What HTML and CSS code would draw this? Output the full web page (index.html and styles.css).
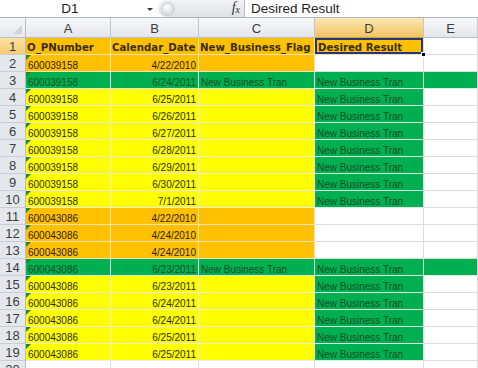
FILE: index.html
```html
<!DOCTYPE html>
<html>
<head>
<meta charset="utf-8">
<link rel="stylesheet" href="styles.css">
</head>
<body>
<div class="app">
  <div class="fbar">
    <div class="namebox"><span class="nb-text">D1</span><span class="nb-arrow"></span></div>
    <div class="splitter"><span class="knob"></span><span class="fx">f<sub>x</sub></span></div>
    <div class="formula">Desired Result</div>
  </div>
  <div class="sheet">
    <div class="corner"></div>
    <div class="ch">A</div><div class="ch">B</div><div class="ch">C</div><div class="ch sel">D</div><div class="ch">E</div>

    <div class="rh sel">1</div>
    <div class="c o hd">O_PNumber</div><div class="c o hd">Calendar_Date</div><div class="c o hd">New_Business_Flag</div><div class="c o hd active">Desired Result</div><div class="c"></div>

    <div class="rh">2</div>
    <div class="c o t">600039158</div><div class="c o r">4/22/2010</div><div class="c o"></div><div class="c"></div><div class="c"></div>

    <div class="rh">3</div>
    <div class="c g t">600039158</div><div class="c g r">6/24/2011</div><div class="c g">New Business Tran</div><div class="c g">New Business Tran</div><div class="c g"></div>

    <div class="rh">4</div>
    <div class="c y t">600039158</div><div class="c y r">6/25/2011</div><div class="c y"></div><div class="c g">New Business Tran</div><div class="c"></div>

    <div class="rh">5</div>
    <div class="c y t">600039158</div><div class="c y r">6/26/2011</div><div class="c y"></div><div class="c g">New Business Tran</div><div class="c"></div>

    <div class="rh">6</div>
    <div class="c y t">600039158</div><div class="c y r">6/27/2011</div><div class="c y"></div><div class="c g">New Business Tran</div><div class="c"></div>

    <div class="rh">7</div>
    <div class="c y t">600039158</div><div class="c y r">6/28/2011</div><div class="c y"></div><div class="c g">New Business Tran</div><div class="c"></div>

    <div class="rh">8</div>
    <div class="c y t">600039158</div><div class="c y r">6/29/2011</div><div class="c y"></div><div class="c g">New Business Tran</div><div class="c"></div>

    <div class="rh">9</div>
    <div class="c y t">600039158</div><div class="c y r">6/30/2011</div><div class="c y"></div><div class="c g">New Business Tran</div><div class="c"></div>

    <div class="rh">10</div>
    <div class="c y t">600039158</div><div class="c y r">7/1/2011</div><div class="c y"></div><div class="c g">New Business Tran</div><div class="c"></div>

    <div class="rh">11</div>
    <div class="c o t">600043086</div><div class="c o r">4/22/2010</div><div class="c o"></div><div class="c"></div><div class="c"></div>

    <div class="rh">12</div>
    <div class="c o t">600043086</div><div class="c o r">4/24/2010</div><div class="c o"></div><div class="c"></div><div class="c"></div>

    <div class="rh">13</div>
    <div class="c o t">600043086</div><div class="c o r">4/24/2010</div><div class="c o"></div><div class="c"></div><div class="c"></div>

    <div class="rh">14</div>
    <div class="c g t">600043086</div><div class="c g r">6/23/2011</div><div class="c g">New Business Tran</div><div class="c g">New Business Tran</div><div class="c g"></div>

    <div class="rh">15</div>
    <div class="c y t">600043086</div><div class="c y r">6/23/2011</div><div class="c y"></div><div class="c g">New Business Tran</div><div class="c"></div>

    <div class="rh">16</div>
    <div class="c y t">600043086</div><div class="c y r">6/24/2011</div><div class="c y"></div><div class="c g">New Business Tran</div><div class="c"></div>

    <div class="rh">17</div>
    <div class="c y t">600043086</div><div class="c y r">6/24/2011</div><div class="c y"></div><div class="c g">New Business Tran</div><div class="c"></div>

    <div class="rh">18</div>
    <div class="c y t">600043086</div><div class="c y r">6/25/2011</div><div class="c y"></div><div class="c g">New Business Tran</div><div class="c"></div>

    <div class="rh">19</div>
    <div class="c y t">600043086</div><div class="c y r">6/25/2011</div><div class="c y"></div><div class="c g">New Business Tran</div><div class="c"></div>

    <div class="rh">20</div>
    <div class="c"></div><div class="c"></div><div class="c"></div><div class="c"></div><div class="c"></div>
  </div>
</div>
</body>
</html>
```
FILE: styles.css
```css
html, body {
  margin: 0;
  padding: 0;
  background: #ffffff;
  overflow: hidden;
}

.app {
  width: 478px;
  height: 368px;
  overflow: hidden;
  font-family: "Liberation Sans", Arial, sans-serif;
}

/* formula bar */
.fbar {
  display: flex;
  height: 18px;
  box-sizing: border-box;
  border-bottom: 1px solid #aeb4bc;
  background: #ffffff;
}

.namebox {
  width: 158px;
  display: flex;
  align-items: center;
  position: relative;
  background: #ffffff;
}

.nb-text {
  width: 140px;
  text-align: center;
  font-size: 13.5px;
  line-height: 17px;
  color: #1e1e1e;
}

.nb-arrow {
  width: 0;
  height: 0;
  margin-left: 7px;
  margin-top: 1px;
  border-left: 3px solid transparent;
  border-right: 3px solid transparent;
  border-top: 3px solid #3a3a3a;
}

.splitter {
  width: 87px;
  display: flex;
  align-items: center;
  justify-content: space-between;
  background: linear-gradient(#f1f2f4, #dfe2e6);
  border-radius: 9px 0 0 9px;
  border-right: 1px solid #b8bdc4;
  padding-left: 3px;
  padding-right: 4px;
  box-sizing: border-box;
}

.knob {
  width: 14px;
  height: 14px;
  border-radius: 50%;
  background: radial-gradient(circle at 40% 35%, #ffffff, #d6d9de 70%);
  border: 1px solid #c9cdd3;
  box-sizing: border-box;
}

.fx {
  font-family: "Liberation Serif", "Times New Roman", serif;
  font-style: italic;
  font-size: 14px;
  line-height: 16px;
  color: #333333;
}

.fx sub {
  font-size: 10px;
  vertical-align: -1px;
}

.formula {
  flex: 1;
  padding-left: 6px;
  font-size: 13.5px;
  line-height: 17px;
  color: #1e1e1e;
}

/* sheet */
.sheet {
  display: grid;
  grid-template-columns: 26px 85px 88px 116px 109px 54px;
  grid-template-rows: 20px repeat(20, 17px);
}

.corner {
  position: relative;
  background: linear-gradient(#f6f7f9, #e4e7eb);
  border-right: 1px solid #b8bec6;
  border-bottom: 1px solid #b8bec6;
  box-sizing: border-box;
}

.corner::after {
  content: "";
  position: absolute;
  right: 3px;
  bottom: 3px;
  width: 0;
  height: 0;
  border-left: 9px solid transparent;
  border-bottom: 9px solid #cfd4da;
}

.ch {
  box-sizing: border-box;
  height: 20px;
  padding-top: 2px;
  line-height: 17px;
  text-align: center;
  font-size: 13px;
  color: #3c3c3c;
  background: linear-gradient(#f7f8fa, #e3e6ea);
  border-right: 1px solid #c3c8cf;
  border-bottom: 1px solid #b8bec6;
  overflow: hidden;
}

.ch.sel {
  background: linear-gradient(#fbe6b3, #f2c461);
  border-bottom-color: #c9a24a;
}

.rh {
  box-sizing: border-box;
  height: 17px;
  padding-top: 1px;
  line-height: 16px;
  text-align: center;
  font-size: 13px;
  color: #3c3c3c;
  background: #e4e7ec;
  border-right: 1px solid #b8bec6;
  border-bottom: 1px solid #c9ced5;
  overflow: hidden;
}

.rh.sel {
  background: linear-gradient(#fbe0a2, #f5cc73);
}

.c {
  position: relative;
  box-sizing: border-box;
  height: 17px;
  padding: 2px 2px 0 2px;
  line-height: 17px;
  font-size: 10px;
  white-space: nowrap;
  overflow: hidden;
  color: #222222;
  background: #ffffff;
  border-right: 1px solid #dadcdf;
  border-bottom: 1px solid #dadcdf;
}

.c.o {
  background: #ffc000;
  color: #2b2206;
  border-color: #f3e2b4;
}

.c.y {
  background: #ffff00;
  color: #2b2b08;
  border-color: #ecece0;
}

.c.g {
  background: #00b050;
  color: #124e25;
  border-color: #d7ebe0;
}

.c.r {
  text-align: right;
}

.c.hd {
  font-family: "DejaVu Sans", Verdana, sans-serif;
  font-weight: bold;
  font-size: 10.2px;
  line-height: 15px;
  color: #3a2d06;
  padding: 2px 1px 0 1px;
}

.c.t::before {
  content: "";
  position: absolute;
  left: 0;
  top: 0;
  width: 0;
  height: 0;
  border-top: 5px solid #1f8a2a;
  border-right: 5px solid transparent;
}

.c.active {
  overflow: visible;
  padding-left: 3px;
  box-shadow: inset 0 0 0 2px #22367c;
}

.c.active::after {
  content: "";
  position: absolute;
  right: -3px;
  bottom: -3px;
  width: 5px;
  height: 5px;
  background: #000000;
  border: 1px solid #ffffff;
  box-sizing: border-box;
  z-index: 2;
}
```
